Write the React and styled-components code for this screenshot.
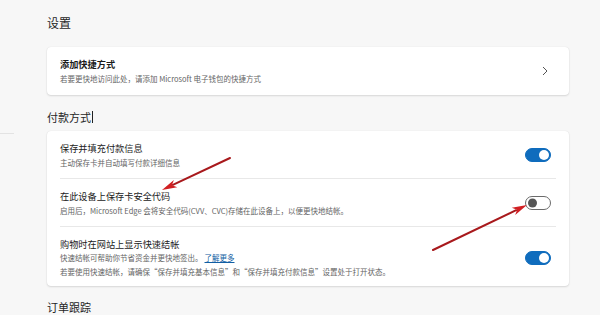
import React from 'react';
import styled, { createGlobalStyle } from 'styled-components';

const GlobalStyle = createGlobalStyle`
  * {
    box-sizing: border-box;
  }
  html,
  body {
    margin: 0;
    padding: 0;
    background: #f7f7f7;
  }
  body {
    font-family: 'Noto Sans CJK SC', 'Noto Sans', sans-serif;
    color: #1b1b1b;
  }
`;

const Page = styled.div`
  position: relative;
  width: 600px;
  height: 315px;
  overflow: hidden;
  display: flex;
  background: #f7f7f7;
`;

const Sidebar = styled.aside`
  width: 47px;
  flex-shrink: 0;
`;

const NavRule = styled.div`
  margin-top: 133px;
  width: 14px;
  height: 1px;
  background: #e3e3e3;
`;

const Main = styled.main`
  width: 522px;
  padding-top: 15px;
`;

const SectionTitle = styled.h2`
  margin: ${(props) => props.$top || 0}px 0 0;
  font-size: ${(props) => props.$size || 11}px;
  line-height: ${(props) => props.$lh || 14}px;
  font-weight: 400;
  color: #262626;
  display: flex;
  align-items: center;
`;

const Caret = styled.span`
  display: inline-block;
  width: 1px;
  height: 12px;
  margin-left: 1px;
  background: #222;
`;

const Card = styled.section`
  margin-top: ${(props) => props.$top || 0}px;
  background: #fff;
  border-radius: 4px;
  box-shadow: 0 0 1px rgba(0, 0, 0, 0.12), 0 1px 2px rgba(0, 0, 0, 0.12);
  padding: 0 13px;
`;

const Row = styled.div`
  display: flex;
  align-items: center;
  justify-content: space-between;
  padding: 10px 5px ${(props) => props.$bottom || 9}px 0;
  border-top: ${(props) => (props.$divided ? '1px solid #e8e8e8' : 'none')};
`;

const RowText = styled.div`
  display: flex;
  flex-direction: column;
`;

const RowTitle = styled.div`
  font-size: 9.2px;
  line-height: 14px;
  font-weight: ${(props) => (props.$bold ? 700 : 400)};
  color: #1b1b1b;
`;

const RowSub = styled.div`
  margin-top: ${(props) => (props.$tight ? 0 : 1)}px;
  font-size: 7.5px;
  line-height: ${(props) => (props.$tight ? 14 : 13)}px;
  color: #646464;
  white-space: nowrap;
`;

const Link = styled.a`
  color: #115ea3;
  text-decoration: underline;
  margin-left: 2px;
`;

const Chevron = styled.svg`
  width: 8px;
  height: 10px;
  margin-right: 2px;
`;

const Toggle = styled.div`
  position: relative;
  width: 26px;
  height: 14px;
  border-radius: 7px;
  flex-shrink: 0;
  background: ${(props) => (props.$on ? '#0f6cbd' : '#fff')};
  border: 1px solid ${(props) => (props.$on ? '#0f6cbd' : '#6b6b6b')};

  &::after {
    content: '';
    position: absolute;
    top: 50%;
    transform: translateY(-50%);
    width: ${(props) => (props.$on ? 10 : 9)}px;
    height: ${(props) => (props.$on ? 10 : 9)}px;
    border-radius: 50%;
    background: ${(props) => (props.$on ? '#fff' : '#555')};
    left: ${(props) => (props.$on ? '13px' : '2px')};
  }
`;

const Overlay = styled.svg`
  position: absolute;
  left: 0;
  top: 0;
  width: 600px;
  height: 315px;
  pointer-events: none;
`;

// red annotation arrow, tip at (x2, y2)
const Arrow = ({ x1, y1, x2, y2 }) => {
  const dx = x2 - x1;
  const dy = y2 - y1;
  const len = Math.sqrt(dx * dx + dy * dy);
  const ux = dx / len;
  const uy = dy / len;
  const headLen = 15;
  const headW = 4;
  const bx = x2 - ux * headLen;
  const by = y2 - uy * headLen;
  const px = -uy * headW;
  const py = ux * headW;
  return (
    <g>
      <line
        x1={x1}
        y1={y1}
        x2={bx + ux * 3}
        y2={by + uy * 3}
        stroke='#a8191c'
        strokeWidth='2'
        strokeLinecap='round'
      />
      <polygon
        points={`${x2},${y2} ${bx + px},${by + py} ${bx + ux * 4},${by + uy * 4} ${bx - px},${by - py}`}
        fill='#d11f22'
      />
    </g>
  );
};

const App = () => {
  return (
    <>
      <GlobalStyle />
      <Page>
        <Sidebar>
          <NavRule />
        </Sidebar>
        <Main>
          <SectionTitle $size={12} $lh={16}>
            设置
          </SectionTitle>

          <Card $top={16}>
            <Row $bottom={10}>
              <RowText>
                <RowTitle $bold>添加快捷方式</RowTitle>
                <RowSub>若要更快地访问此处，请添加 Microsoft 电子钱包的快捷方式</RowSub>
              </RowText>
              <Chevron viewBox='0 0 8 10'>
                <path d='M2 1 L6 5 L2 9' fill='none' stroke='#555' strokeWidth='1' />
              </Chevron>
            </Row>
          </Card>

          <SectionTitle $top={15}>
            付款方式
            <Caret />
          </SectionTitle>

          <Card $top={7}>
            <Row>
              <RowText>
                <RowTitle>保存并填充付款信息</RowTitle>
                <RowSub>主动保存卡并自动填写付款详细信息</RowSub>
              </RowText>
              <Toggle $on />
            </Row>
            <Row $divided>
              <RowText>
                <RowTitle>在此设备上保存卡安全代码</RowTitle>
                <RowSub>
                  启用后，Microsoft Edge 会将安全代码(CVV、CVC)存储在此设备上，以便更快地结帐。
                </RowSub>
              </RowText>
              <Toggle />
            </Row>
            <Row $divided $bottom={7}>
              <RowText>
                <RowTitle>购物时在网站上显示快速结帐</RowTitle>
                <RowSub $tight>
                  快速结帐可帮助你节省资金并更快地签出。
                  <Link>了解更多</Link>
                </RowSub>
                <RowSub $tight>
                  若要使用快速结帐，请确保“保存并填充基本信息”和“保存并填充付款信息”设置处于打开状态。
                </RowSub>
              </RowText>
              <Toggle $on />
            </Row>
          </Card>

          <SectionTitle $top={14}>订单跟踪</SectionTitle>
        </Main>

        <Overlay viewBox='0 0 600 315'>
          <Arrow x1={230} y1={158} x2={162} y2={190} />
          <Arrow x1={433} y1={250} x2={527} y2={205} />
        </Overlay>
      </Page>
    </>
  );
};

export default App;
